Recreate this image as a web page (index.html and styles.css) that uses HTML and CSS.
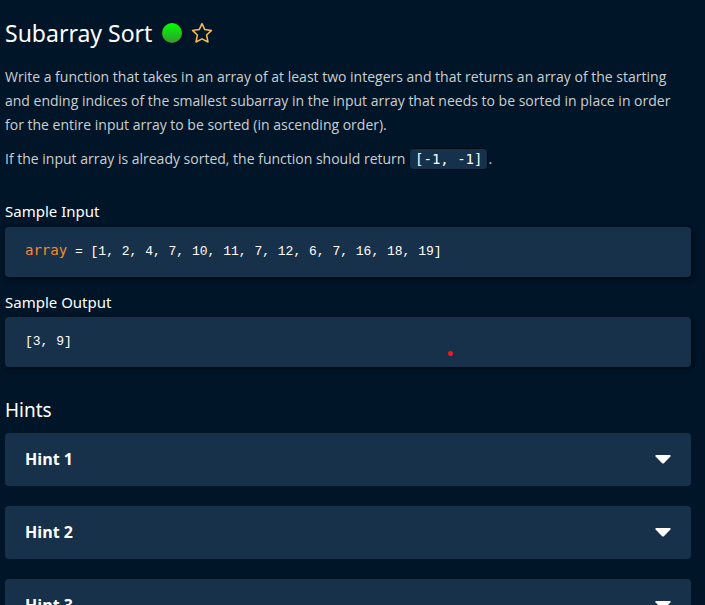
FILE: index.html
```html
<!DOCTYPE html>
<html lang="en">
<head>
<meta charset="utf-8">
<meta name="viewport" content="width=device-width, initial-scale=1">
<title>Subarray Sort</title>
<link rel="stylesheet" href="styles.css">
</head>
<body>
<main class="question">
  <header class="title-row">
    <h1 class="title">Subarray Sort</h1>
    <span class="difficulty"></span>
    <button class="star" type="button" aria-label="Star question">
      <svg viewBox="0 0 22 22" width="22" height="22" fill="none" stroke="#f8bd50" stroke-width="1.5" stroke-linejoin="round"><path d="M11 1.6 13.8 7.6 20.5 8.4 15.6 13 17 20 11 16.8 5 20 6.4 13 1.5 8.4 8.2 7.6Z"/></svg>
    </button>
  </header>
  <div class="prompt">
    <p>Write a function that takes in an array of at least two integers and that returns an array of the starting and ending indices of the smallest subarray in the input array that needs to be sorted in place in order for the entire input array to be sorted (in ascending order).</p>
    <p>If the input array is already sorted, the function should return <code class="inline-code">[-1, -1]</code>.</p>
  </div>
  <section class="sample">
    <h2 class="sample-title">Sample Input</h2>
    <pre class="code-block"><span class="variable">array</span> = [1, 2, 4, 7, 10, 11, 7, 12, 6, 7, 16, 18, 19]</pre>
  </section>
  <section class="sample sample-output">
    <h2 class="sample-title">Sample Output</h2>
    <pre class="code-block">[3, 9]</pre>
    <span class="marker"></span>
  </section>
  <section class="hints">
    <h2 class="hints-title">Hints</h2>
    <button class="hint" type="button">Hint 1<svg class="caret" viewBox="0 0 16 9" width="16" height="9"><path d="M.8 0H15.2Q16 .6 15.4 1.4L8.9 8.2Q8 9 7.1 8.2L.6 1.4Q0 .6.8 0Z"/></svg></button>
    <button class="hint" type="button">Hint 2<svg class="caret" viewBox="0 0 16 9" width="16" height="9"><path d="M.8 0H15.2Q16 .6 15.4 1.4L8.9 8.2Q8 9 7.1 8.2L.6 1.4Q0 .6.8 0Z"/></svg></button>
    <button class="hint" type="button">Hint 3<svg class="caret" viewBox="0 0 16 9" width="16" height="9"><path d="M.8 0H15.2Q16 .6 15.4 1.4L8.9 8.2Q8 9 7.1 8.2L.6 1.4Q0 .6.8 0Z"/></svg></button>
  </section>
</main>
</body>
</html>
```
FILE: styles.css
```css
* {
  box-sizing: border-box;
}

body {
  margin: 0;
  height: 100vh;
  overflow: hidden;
  background: #001528;
  color: #fff;
  font-family: "Open Sans", "Noto Sans", sans-serif;
}

h1,
h2,
p,
pre {
  margin: 0;
}

button {
  border: 0;
  color: inherit;
  font-family: inherit;
  cursor: pointer;
}

.question {
  padding: 17px 14px 20px 5px;
}

.title-row {
  display: flex;
  align-items: center;
  gap: 9px;
}

.title {
  padding-right: 1px;
  font: 400 23px/32px "Noto Sans", sans-serif;
}

.difficulty {
  width: 20px;
  height: 20px;
  border-radius: 50%;
  background: linear-gradient(#00ff00, #339933);
  box-shadow: 1px 1px 3px #000a14;
}

.star {
  display: flex;
  padding: 0;
  background: none;
}

.prompt {
  display: grid;
  gap: 10px;
  margin-top: 16px;
  color: #cccfd1;
  font-size: 14px;
  line-height: 24px;
}

.inline-code {
  padding: 2px 5px;
  border: 1px solid #000810;
  border-radius: 4px;
  background: #15314b;
  color: #fff;
  font: 14px/18px "DejaVu Sans Mono", monospace;
}

.sample {
  margin-top: 30px;
}

.sample-output {
  position: relative;
  margin-top: 15px;
}

.sample-title {
  font: 400 15px/20px "Noto Sans", sans-serif;
}

.code-block {
  margin-top: 6px;
  padding: 15px 20px;
  border-radius: 4px;
  background: #17314b;
  box-shadow: 2px 2px 5px #000a14;
  font: 13px/20px "Liberation Mono", monospace;
}

.sample-output .code-block {
  margin-top: 5px;
}

.variable {
  color: #f78c2e;
  font-family: "DejaVu Sans Mono", monospace;
  font-size: 14px;
  line-height: 16px;
}

.marker {
  position: absolute;
  right: 238px;
  bottom: 11px;
  width: 5px;
  height: 5px;
  border-radius: 50%;
  background: #ed1c24;
}

.hints {
  display: grid;
  gap: 20px;
  margin-top: 30px;
}

.hints-title {
  margin-bottom: -10px;
  font: 400 19px/26px "Noto Sans", sans-serif;
}

.hint {
  display: flex;
  align-items: center;
  justify-content: space-between;
  padding: 15px 20px;
  border-radius: 4px;
  background: #17314b;
  font-size: 16px;
  font-weight: 700;
  line-height: 23px;
}

.caret {
  fill: #fff;
}
```
